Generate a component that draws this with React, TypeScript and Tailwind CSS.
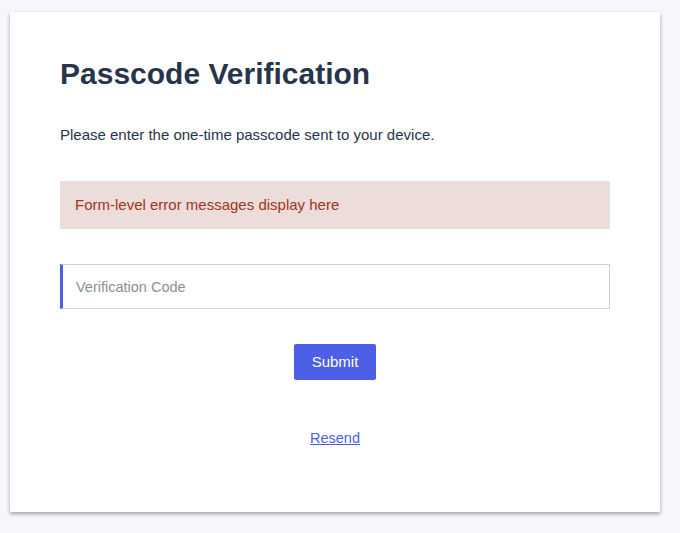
import React from 'react';

const App = () => {
  return (
    <div
      className="min-h-screen bg-[#f6f7fb] pt-[12px] pl-[10px]"
      style={{ fontFamily: '"Liberation Sans", Arial, sans-serif' }}
    >
      <div className="w-[650px] h-[500px] bg-white shadow-[0_2px_4px_rgba(0,0,0,0.35)] px-[50px] pt-[44px]">
        <h1 className="text-[30px] leading-[36px] font-bold text-[#27354a]">Passcode Verification</h1>
        <p className="mt-[33px] text-[15px] leading-[20px] text-[#27354a]">
          Please enter the one-time passcode sent to your device.
        </p>

        {/* error */}
        <div className="mt-[36px] h-[48px] bg-[#ecdcda] flex items-center px-[15px]">
          <span className="text-[15px] text-[#a1341c]">Form-level error messages display here</span>
        </div>

        <input
          type="text"
          placeholder="Verification Code"
          className="mt-[35px] w-full h-[45px] border border-[#d0d1d5] border-l-[3px] border-l-[#4c5fe6] px-[13px] text-[14.5px] text-[#27354a] placeholder:text-[#8a8f99] outline-none"
        />

        <div className="flex justify-center mt-[35px]">
          <button className="w-[82px] h-[36px] bg-[#4c5fe6] text-white text-[15px] rounded-[2px]">
            Submit
          </button>
        </div>

        <div className="flex justify-center mt-[48px]">
          <a href="#" className="text-[14.5px] text-[#4c5fe6] underline">Resend</a>
        </div>
      </div>
    </div>
  );
};

export default App;
